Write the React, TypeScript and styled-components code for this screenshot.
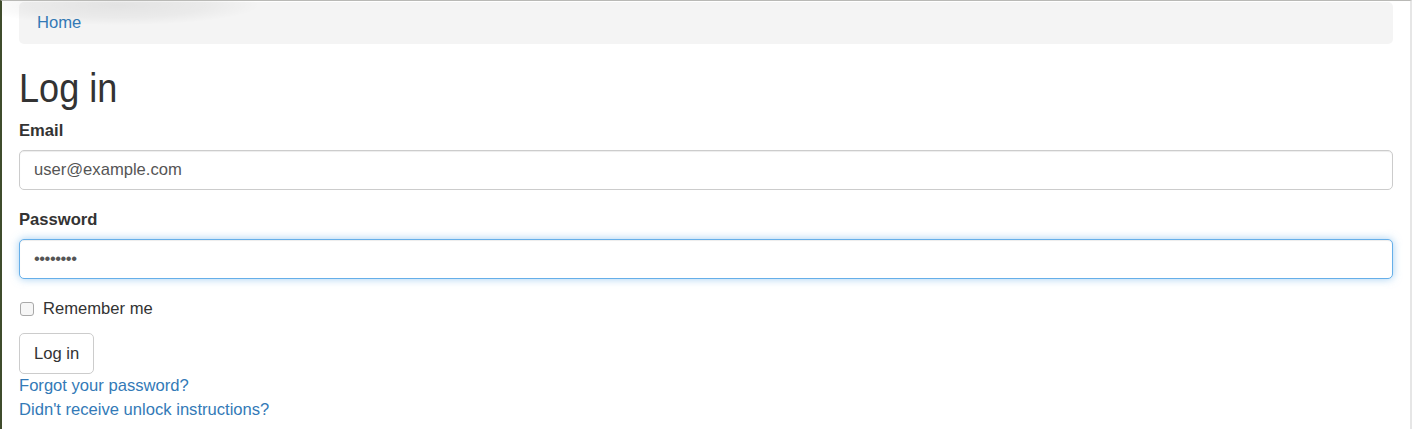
import React from 'react';
import styled, { createGlobalStyle } from 'styled-components';

const GlobalStyle = createGlobalStyle`
  html, body {
    margin: 0;
    padding: 0;
    background: #fff;
  }
  body {
    font-family: "Liberation Sans", Arial, Helvetica, sans-serif;
    font-size: 16.6px;
    line-height: 24px;
    color: #333;
  }
  * {
    box-sizing: border-box;
  }
`;

const Frame = styled.div`
  position: relative;
  min-height: 429px;
  border-top: 1px solid #b9b9b6;
  border-left: 2px solid #3f4c2c;
  border-right: 2px solid #e6e6e6;
  padding: 1px 17px 0 17px;
  overflow: hidden;
`;

const TopShadow = styled.div`
  position: absolute;
  top: -16px;
  left: -24px;
  width: 280px;
  height: 40px;
  border-radius: 50%;
  background: radial-gradient(ellipse at center, rgba(0, 0, 0, 0.07) 0%, rgba(0, 0, 0, 0.04) 45%, rgba(0, 0, 0, 0) 72%);
  pointer-events: none;
`;

const Breadcrumb = styled.ol`
  list-style: none;
  margin: 0;
  padding: 9px 18px;
  height: 42px;
  background: #f4f4f4;
  border-radius: 5px;
`;

const Crumb = styled.li`
  display: inline-block;
`;

const Link = styled.a`
  color: #337ab7;
  text-decoration: none;
`;

const Title = styled.h1`
  margin: 21px 0 8px;
  font-family: "Liberation Sans", Arial, sans-serif;
  font-size: 41px;
  line-height: 46px;
  font-weight: 400;
  color: #333;
  transform: scaleX(0.88);
  transform-origin: left center;
`;

const Form = styled.form`
  display: flex;
  flex-direction: column;
`;

const Group = styled.div`
  margin-bottom: 18px;
`;

const Label = styled.label`
  display: block;
  margin-bottom: 7px;
  font-weight: 700;
`;

const Input = styled.input<{ $focused?: boolean }>`
  display: block;
  width: 100%;
  height: 40px;
  padding: 7px 14px;
  font-family: inherit;
  font-size: 16.6px;
  color: #555;
  background: #fff;
  border: 1px solid ${({ $focused }) => ($focused ? '#66afe9' : '#ccc')};
  border-radius: 5px;
  outline: none;
  box-shadow: ${({ $focused }) =>
    $focused
      ? 'inset 0 1px 1px rgba(0,0,0,.075), 0 0 9px rgba(102,175,233,.6)'
      : 'inset 0 1px 1px rgba(0,0,0,.075)'};
  letter-spacing: ${({ type }) => (type === 'password' ? '-0.5px' : 'normal')};
`;

const CheckRow = styled.label`
  display: flex;
  align-items: center;
  gap: 9px;
  height: 24px;
  margin-bottom: 12px;
  padding-left: 1px;
`;

const Check = styled.input`
  appearance: none;
  margin: 0;
  width: 14px;
  height: 14px;
  border: 1px solid #a9a9a9;
  border-radius: 3px;
  background: #f6f6f6;
`;

const Button = styled.button`
  align-self: flex-start;
  height: 41px;
  padding: 7px 14px;
  font-family: inherit;
  font-size: 16.6px;
  line-height: 24px;
  color: #333;
  background: #fff;
  border: 1px solid #ccc;
  border-radius: 5px;
`;

const Links = styled.div`
  display: flex;
  flex-direction: column;
  align-items: flex-start;
`;

export default function App() {
  return (
    <>
      <GlobalStyle />
      <Frame>
        <TopShadow />
        <Breadcrumb>
          <Crumb>
            <Link href="#">Home</Link>
          </Crumb>
        </Breadcrumb>

        <Title>Log in</Title>

        <Form onSubmit={(e) => e.preventDefault()}>
          <Group>
            <Label htmlFor="email">Email</Label>
            <Input id="email" type="email" defaultValue="user@example.com" />
          </Group>

          <Group>
            <Label htmlFor="password">Password</Label>
            <Input id="password" type="password" defaultValue="password" $focused />
          </Group>

          <CheckRow>
            <Check type="checkbox" />
            Remember me
          </CheckRow>

          <Button type="submit">Log in</Button>
        </Form>

        <Links>
          <Link href="#">Forgot your password?</Link>
          <Link href="#">Didn't receive unlock instructions?</Link>
        </Links>
      </Frame>
    </>
  );
}
